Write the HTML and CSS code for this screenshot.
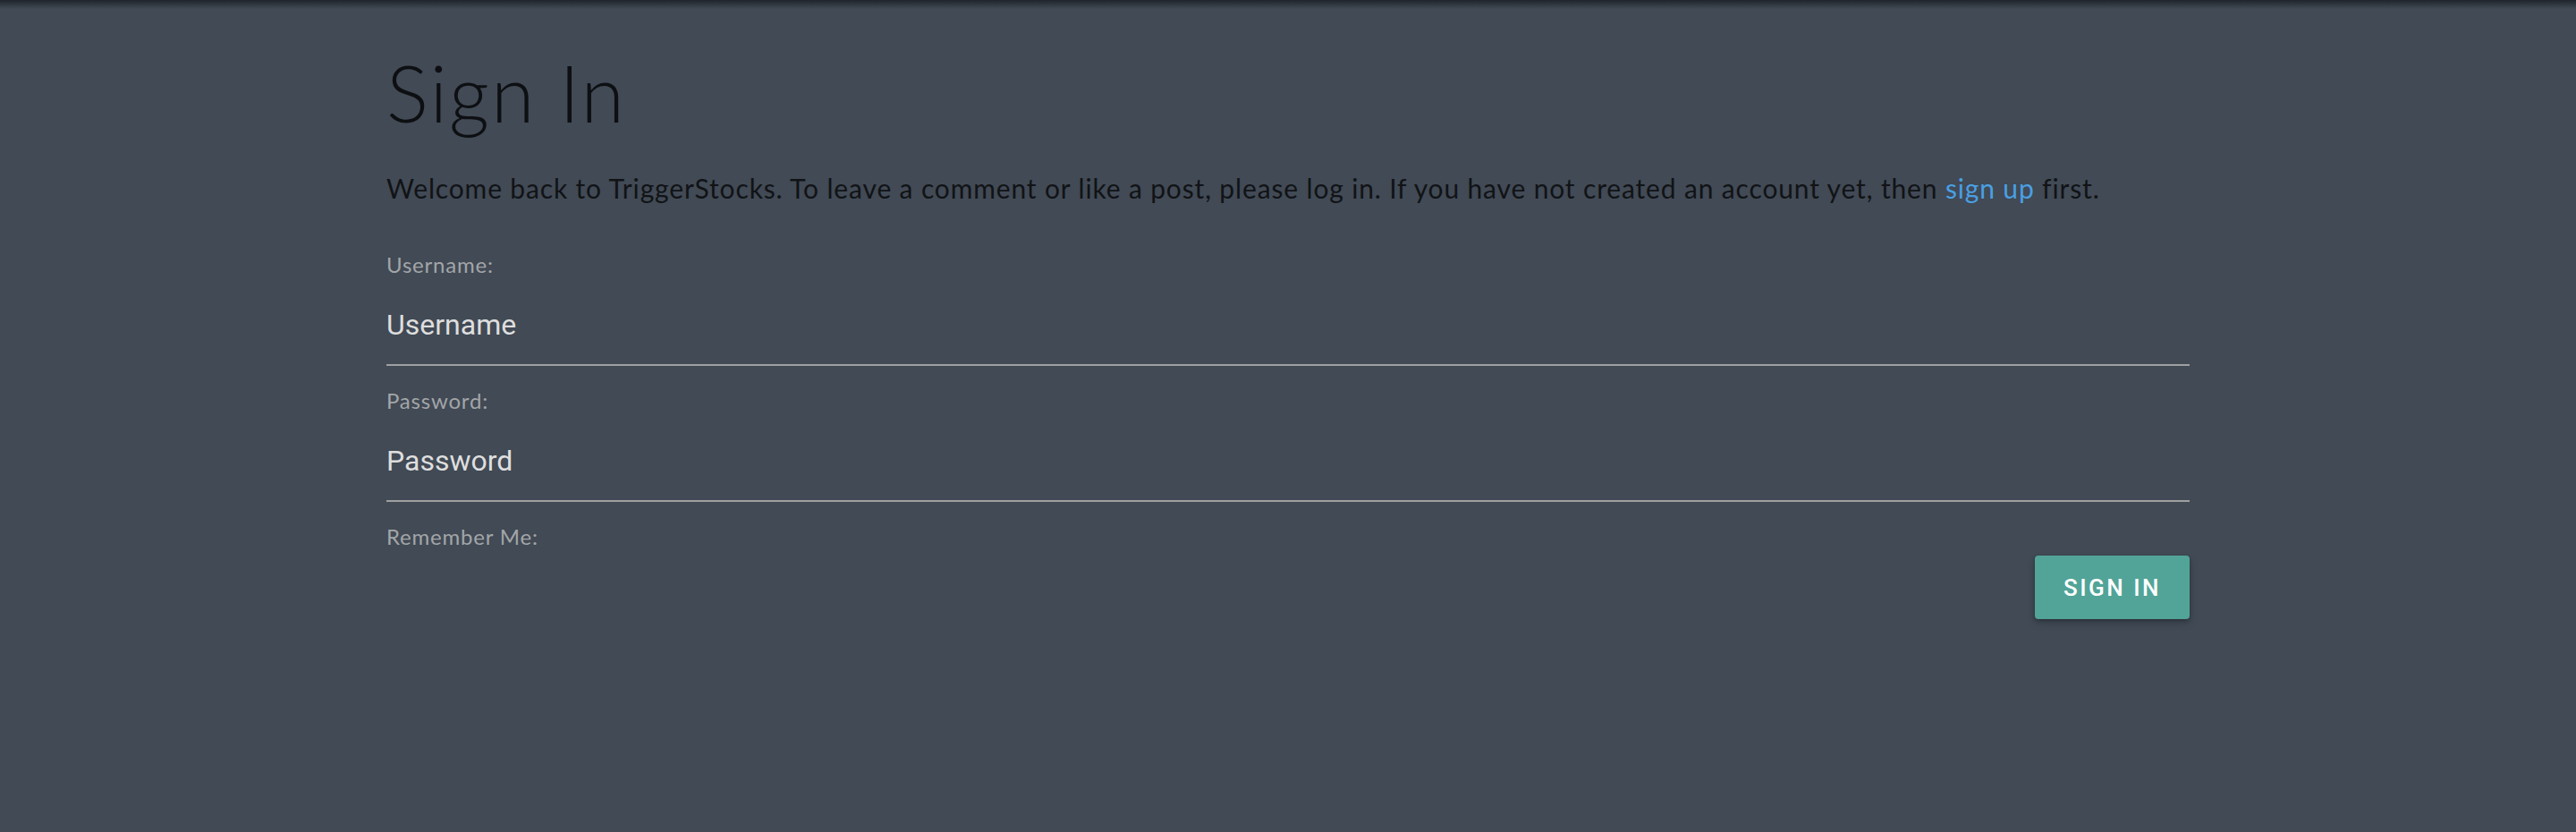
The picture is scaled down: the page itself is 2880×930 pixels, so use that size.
FILE: index.html
```html
<!DOCTYPE html>
<html lang="en">
<head>
<meta charset="utf-8">
<title>Sign In</title>
<link rel="stylesheet" href="styles.css">
</head>
<body>
<div class="topshade"></div>
<main class="container">
  <h1 class="title">Sign In</h1>
  <p class="intro">Welcome back to TriggerStocks. To leave a comment or like a post, please log in. If you have not created an account yet, then <a class="link" href="#">sign up</a> first.</p>
  <form class="login">
    <div class="field">
      <label class="label" for="id_login">Username:</label>
      <input class="input" id="id_login" type="text" placeholder="Username">
    </div>
    <div class="field">
      <label class="label" for="id_password">Password:</label>
      <input class="input" id="id_password" type="password" placeholder="Password">
    </div>
    <div class="remember">
      <label class="label" for="id_remember">Remember Me:</label>
    </div>
    <div class="actions">
      <button class="btn" type="submit">SIGN IN</button>
    </div>
  </form>
</main>
</body>
</html>
```

FILE: styles.css
```css
html, body {
  margin: 0;
  padding: 0;
}
body {
  background: #414a55;
  min-height: 930px;
  font-family: "Lato", "Noto Sans", sans-serif;
  color: #0f1114;
  position: relative;
}
.topshade {
  position: absolute;
  top: 0;
  left: 0;
  right: 0;
  height: 10px;
  background: linear-gradient(to bottom, rgba(20,24,28,0.75), rgba(20,24,28,0));
}
.container {
  width: 70%;
  margin: 0 auto;
  padding-top: 55px;
}
.title {
  margin: 0;
  font-size: 88px;
  font-weight: 300;
  line-height: 97px;
  letter-spacing: 2px;
  color: #0d0f12;
}
.intro {
  margin: 36px 0 0;
  font-size: 30px;
  line-height: 45px;
  font-weight: 400;
  letter-spacing: 0.85px;
  color: #111316;
}
.link {
  color: #4a9fe3;
  text-decoration: none;
}
.login {
  margin-top: 48px;
}
.field {
  display: flex;
  flex-direction: column;
  gap: 27.5px;
  margin-bottom: 24.5px;
}
.label {
  display: block;
  font-size: 24px;
  line-height: 30px;
  letter-spacing: 0.8px;
  color: #a3a5a8;
}
.input {
  display: block;
  box-sizing: content-box;
  width: 100%;
  height: 48px;
  padding: 0 0 20px;
  margin: 0;
  border: none;
  border-bottom: 2px solid #a0a0a0;
  background: transparent;
  font-family: "Roboto", "Liberation Sans", sans-serif;
  font-size: 32px;
  color: #e0e0e0;
  outline: none;
}
.input::placeholder {
  color: #dedede;
  opacity: 1;
}
.actions {
  display: flex;
  justify-content: flex-end;
  margin-top: 6px;
}
.btn {
  height: 71px;
  padding: 0 32px;
  border: none;
  border-radius: 4px;
  background: #52a498;
  color: #ffffff;
  font-family: "Roboto", "Liberation Sans", sans-serif;
  font-size: 26px;
  font-weight: 500;
  letter-spacing: 2.5px;
  box-shadow: 0 4px 10px rgba(0,0,0,0.18), 0 2px 4px rgba(0,0,0,0.2);
  cursor: pointer;
}
```
